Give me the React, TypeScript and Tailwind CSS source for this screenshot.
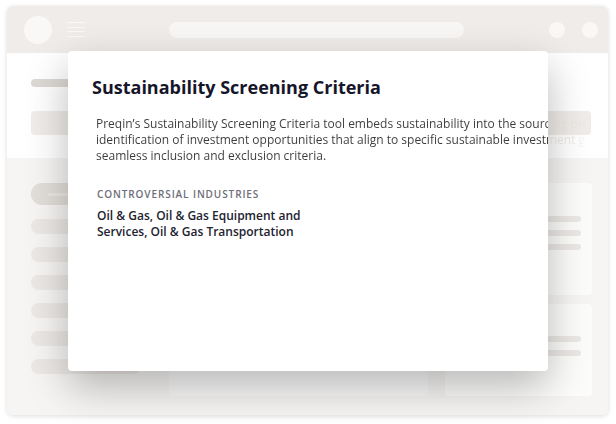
import React from "react";

export default function App() {
  const pills = [0, 1, 2, 3, 4, 5];
  return (
    <div className="relative w-[616px] h-[424px] bg-white pt-[6px] pl-[7px] font-['Open_Sans','Noto_Sans',sans-serif]">
      {/* Background browser window */}
      <div className="w-[601px] h-[409px] rounded-[6px] overflow-hidden shadow-[0_1px_5px_rgba(0,0,0,0.14)] flex flex-col">
        {/* Top bar */}
        <div className="h-[47px] bg-[#efece9] flex items-center pl-[17px] pr-[10px]">
          <div className="w-7 h-7 rounded-full bg-[#f9f8f7]" />
          <div className="ml-[15px] w-[18px] flex flex-col gap-[3.5px]">
            <div className="h-px bg-[#f9f8f7]" />
            <div className="h-px bg-[#f9f8f7]" />
            <div className="h-px bg-[#f9f8f7]" />
            <div className="h-px bg-[#f9f8f7]" />
          </div>
          <div className="ml-[84px] w-[295px] h-4 rounded-full bg-[#f8f7f6]" />
          <div className="ml-auto flex gap-[17px]">
            <div className="w-4 h-4 rounded-full bg-[#f9f8f7]" />
            <div className="w-4 h-4 rounded-full bg-[#f9f8f7]" />
          </div>
        </div>
        {/* White section */}
        <div className="h-[105px] bg-white pl-[24px] pt-[26px]">
          <div className="w-[70px] h-2 rounded-full bg-[#dcd8d4]" />
          <div className="mt-[24px] w-[560px] h-6 rounded-[4px] bg-[#efece9]" />
        </div>
        {/* Lower section */}
        <div className="flex-1 bg-[#f6f5f3] pl-[24px] pt-[25px] flex items-start">
          <div className="w-[110px] flex flex-col">
            <div className="h-[22px] rounded-full bg-[#e2ded9] flex items-center pl-[17px]">
              <div className="w-[50px] h-[3px] rounded-full bg-[#ebe8e5]" />
            </div>
            <div className="mt-[14px] flex flex-col gap-[13px]">
              {pills.map((p) => (
                <div key={p} className="h-[15px] rounded-full bg-[#ebe8e5]" />
              ))}
            </div>
          </div>
          <div className="ml-[28px] w-[259px] h-[213px] rounded-[4px] bg-[#fafafa]" />
          <div className="ml-[17px] w-[147px] flex flex-col gap-[9px]">
            <div className="h-[112px] rounded-[4px] bg-[#fcfcfb] pt-[33px] pl-[15px] pr-[11px] flex flex-col gap-[8px]">
              <div className="h-[6px] rounded-full bg-[#ebe8e5]" />
              <div className="h-[6px] rounded-full bg-[#ebe8e5]" />
              <div className="h-[6px] rounded-full bg-[#ebe8e5]" />
            </div>
            <div className="h-[92px] rounded-[4px] bg-[#fcfcfb] pt-[32px] pl-[15px] pr-[11px] flex flex-col gap-[8px]">
              <div className="h-[6px] rounded-full bg-[#ebe8e5]" />
              <div className="h-[6px] rounded-full bg-[#ebe8e5]" />
            </div>
          </div>
        </div>
      </div>

      {/* Modal */}
      <div className="absolute left-[68px] top-[51px] w-[480px] h-[320px] bg-white rounded-[4px] shadow-[0_16px_42px_rgba(0,0,0,0.27)] pl-[24px] pt-[24px]">
        <h1 className="text-[18px] leading-[24px] font-bold text-[#16162a]">
          Sustainability Screening Criteria
        </h1>
        <div className="mt-[17px] ml-[4px] w-[492px] overflow-hidden text-[12px] leading-[16px] bg-[linear-gradient(90deg,#3b3b3b_452px,#d6d0cb_452px,#e2deda_476px,transparent_490px)] bg-clip-text text-transparent">
          <div className="whitespace-nowrap">
            Preqin’s Sustainability Screening Criteria tool embeds sustainability into the sourcing process
          </div>
          <div className="whitespace-nowrap">
            identification of investment opportunities that align to specific sustainable investment goals
          </div>
          <div className="whitespace-nowrap">seamless inclusion and exclusion criteria.</div>
        </div>
        <div className="mt-[23px] ml-[5px] text-[10px] leading-[14px] font-semibold tracking-[0.9px] text-[#6e6e78] uppercase">
          Controversial Industries
        </div>
        <div className="mt-[7px] ml-[5px] w-[222px] text-[12px] leading-[16px] font-semibold text-[#23232f]">
          Oil &amp; Gas, Oil &amp; Gas Equipment and Services, Oil &amp; Gas Transportation
        </div>
      </div>
    </div>
  );
}
